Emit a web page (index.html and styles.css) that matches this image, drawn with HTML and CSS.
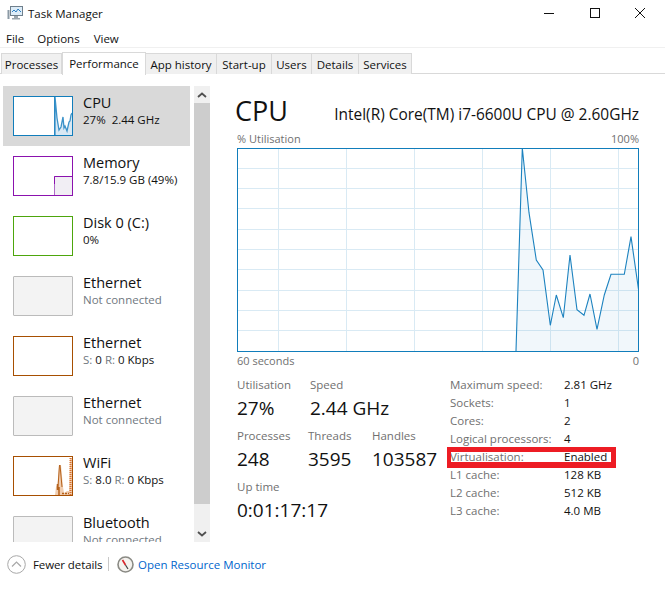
FILE: index.html
```html
<!DOCTYPE html>
<html lang="en">
<head>
<meta charset="utf-8">
<title>Task Manager</title>
<link rel="stylesheet" href="styles.css">
</head>
<body>
<div class="window">
  <header class="titlebar">
    <svg class="app-icon" width="16" height="16" viewBox="0 0 16 16"><rect x="3.500" y="1.500" width="12" height="9" fill="#dcecf8" stroke="#6f7f8c"/><path d="M5 7l2-2 2 2 2-3 3 3" fill="none" stroke="#2f7fc1"/><rect x="0.500" y="5" width="2" height="9" fill="#8c9aa5"/><path d="M7 11h4v2H7zM5 13h8v1.500H5z" fill="#9aa5ad"/></svg>
    <span class="title">Task Manager</span>
    <div class="controls">
      <svg width="10" height="10" viewBox="0 0 10 10"><path d="M0 5.500h10" stroke="#111"/></svg>
      <svg width="10" height="10" viewBox="0 0 10 10"><rect x=".5" y=".5" width="9" height="9" fill="none" stroke="#111"/></svg>
      <svg width="10" height="10" viewBox="0 0 10 10"><path d="M0 0l10 10M10 0L0 10" stroke="#111"/></svg>
    </div>
  </header>
  <nav class="menubar"><span>File</span><span>Options</span><span>View</span></nav>
  <div class="tabs">
    <div class="tab">Processes</div>
    <div class="tab active">Performance</div>
    <div class="tab">App history</div>
    <div class="tab">Start-up</div>
    <div class="tab">Users</div>
    <div class="tab">Details</div>
    <div class="tab">Services</div>
  </div>
  <main class="main">
    <aside class="sidebar">
      <div class="list">
        <div class="item selected">
          <div class="thumb cpu"><svg width="58" height="38" viewBox="0 0 58 38"><path d="M40.500 0V38" stroke="#117dbb"/><polygon points="41,38 41,0 43,21 45,33 47,30 49,20 50,31 51,29 53,34 55,25 56,24 57,18 58,16 58,38" fill="#d9e8f3"/><polyline points="41,38 41,0 43,21 45,33 47,30 49,20 50,31 51,29 53,34 55,25 56,24 57,18 58,16" fill="none" stroke="#3b92c9" stroke-width="1.300"/></svg></div>
          <div class="meta"><div class="name">CPU</div><div class="sub">27%&nbsp; 2.44 GHz</div></div>
        </div>
        <div class="item">
          <div class="thumb mem"><svg width="58" height="38" viewBox="0 0 58 38"><rect x="41" y="19" width="17" height="19" fill="#f1eef4"/><path d="M40.500 38V19.500H58" fill="none" stroke="#b06cc8"/><path d="M40.500 27V19.500H58" fill="none" stroke="#8b12ae"/></svg></div>
          <div class="meta"><div class="name">Memory</div><div class="sub">7.8/15.9 GB (49%)</div></div>
        </div>
        <div class="item">
          <div class="thumb disk"></div>
          <div class="meta"><div class="name">Disk 0 (C:)</div><div class="sub">0%</div></div>
        </div>
        <div class="item">
          <div class="thumb off"></div>
          <div class="meta"><div class="name">Ethernet</div><div class="sub muted">Not connected</div></div>
        </div>
        <div class="item">
          <div class="thumb net"></div>
          <div class="meta"><div class="name">Ethernet</div><div class="sub"><span class="muted">S:</span> 0 <span class="muted">R:</span> 0 Kbps</div></div>
        </div>
        <div class="item">
          <div class="thumb off"></div>
          <div class="meta"><div class="name">Ethernet</div><div class="sub muted">Not connected</div></div>
        </div>
        <div class="item">
          <div class="thumb net"><svg width="58" height="38" viewBox="0 0 58 38"><polygon points="41,38 42,30 43.500,27 45,8 47,8 49,30 50,36 53,34 55,34 56,1 58,1 58,38" fill="#f0cdb0"/><path d="M45.500 8 L44 30M46 8 L48 30" stroke="#b5621c" stroke-width="1"/><path d="M43.500 27v6M45 30v8" stroke="#b5621c" stroke-width="1.500"/><path d="M56.500 1V38" stroke="#d9702a" stroke-width="2" stroke-dasharray="1 1"/><path d="M48 36.500h7" stroke="#b5621c" stroke-width="1.500" stroke-dasharray="2 1"/></svg></div>
          <div class="meta"><div class="name">WiFi</div><div class="sub"><span class="muted">S:</span> 8.0 <span class="muted">R:</span> 0 Kbps</div></div>
        </div>
        <div class="item">
          <div class="thumb off"></div>
          <div class="meta"><div class="name">Bluetooth</div><div class="sub muted">Not connected</div></div>
        </div>
      </div>
      <div class="scrollbar">
        <div class="arrow"><svg width="10" height="6" viewBox="0 0 10 6"><path d="M1 5l4-3.500L9 5" fill="none" stroke="#505050" stroke-width="1.800"/></svg></div>
        <div class="scroll-thumb"></div>
        <div class="arrow down"><svg width="10" height="6" viewBox="0 0 10 6"><path d="M1 1l4 3.500L9 1" fill="none" stroke="#505050" stroke-width="1.800"/></svg></div>
      </div>
    </aside>
    <section class="detail">
      <div class="head"><h1>CPU</h1><div class="model">Intel(R) Core(TM) i7-6600U CPU @ 2.60GHz</div></div>
      <div class="axis top"><span>% Utilisation</span><span>100%</span></div>
      <div class="chart">
        <svg width="400" height="202" viewBox="1 1 400 202">
          <path d="M0 20.500H402M0 40.500H402M0 60.500H402M0 81.500H402M0 101.500H402M0 121.500H402M0 142.500H402M0 162.500H402M0 182.500H402M41.500 0V203M109.500 0V203M177.500 0V203M245.500 0V203M313.500 0V203M381.500 0V203" stroke="#d9eaf4" stroke-width="1"/>
          <polygon points="279,203 285.300,0 292,64.700 299.300,112 306,122 313.300,177.300 319.300,147 326.300,169.700 333,107 340,161.700 347,167.300 353,146 360,181.300 367.300,147 374,126.300 387.300,126.300 394,88.700 402,145 402,203" fill="#117dbb" fill-opacity="0.06"/>
          <polyline points="279,203 285.300,0 292,64.700 299.300,112 306,122 313.300,177.300 319.300,147 326.300,169.700 333,107 340,161.700 347,167.300 353,146 360,181.300 367.300,147 374,126.300 387.300,126.300 394,88.700 402,145" fill="none" stroke="#1c82bf" stroke-width="1.100"/>
        </svg>
      </div>
      <div class="axis bottom"><span>60 seconds</span><span>0</span></div>
      <div class="stats">
        <div class="live">
          <div class="stat-row">
            <div class="stat w-util"><div class="label">Utilisation</div><div class="value">27%</div></div>
            <div class="stat"><div class="label">Speed</div><div class="value">2.44 GHz</div></div>
          </div>
          <div class="stat-row">
            <div class="stat w-proc"><div class="label">Processes</div><div class="value">248</div></div>
            <div class="stat w-thr"><div class="label">Threads</div><div class="value">3595</div></div>
            <div class="stat"><div class="label">Handles</div><div class="value">103587</div></div>
          </div>
          <div class="stat-row">
            <div class="stat"><div class="label">Up time</div><div class="value">0:01:17:17</div></div>
          </div>
        </div>
        <dl class="specs">
          <div class="spec"><dt>Maximum speed:</dt><dd>2.81 GHz</dd></div>
          <div class="spec"><dt>Sockets:</dt><dd>1</dd></div>
          <div class="spec"><dt>Cores:</dt><dd>2</dd></div>
          <div class="spec"><dt>Logical processors:</dt><dd>4</dd></div>
          <div class="spec marked"><dt>Virtualisation:</dt><dd>Enabled</dd><span class="redbox"></span></div>
          <div class="spec"><dt>L1 cache:</dt><dd>128 KB</dd></div>
          <div class="spec"><dt>L2 cache:</dt><dd>512 KB</dd></div>
          <div class="spec"><dt>L3 cache:</dt><dd>4.0 MB</dd></div>
        </dl>
      </div>
    </section>
  </main>
  <footer class="footer">
    <svg class="fewer-icon" width="19" height="19" viewBox="0 0 19 19"><circle cx="9.500" cy="9.500" r="8.800" fill="#fff" stroke="#a8a8a8"/><path d="M5 11.500l4.500-4.500 4.500 4.500" fill="none" stroke="#a8a8a8" stroke-width="1.200"/></svg>
    <span class="fewer">Fewer details</span>
    <span class="sep"></span>
    <svg class="mon-icon" width="17" height="17" viewBox="0 0 17 17"><circle cx="8.500" cy="8.500" r="7.500" fill="#f4f2ee" stroke="#8a8a84" stroke-width="1.600"/><path d="M5.500 4l3 5" stroke="#d8232a" stroke-width="1.600"/><path d="M8.500 9l2.500 4" stroke="#444" stroke-width="1.200"/></svg>
    <a class="link">Open Resource Monitor</a>
  </footer>
</div>
</body>
</html>
```
FILE: styles.css
```css
* { box-sizing: border-box; }
html, body { margin: 0; padding: 0; background: #fff; }
body {
  font-family: "Open Sans", "Noto Sans", "Liberation Sans", sans-serif;
  font-size: 11.5px;
  color: #111;
  overflow: hidden;
}
.window { width: 665px; height: 591px; display: flex; flex-direction: column; }

.titlebar { height: 26px; margin-bottom: 4px; display: flex; align-items: center; padding-left: 7px; flex: none; }
.app-icon { flex: none; }
.title { margin-left: 5px; font-size: 11.5px; }
.controls { margin-left: auto; margin-right: 20px; display: flex; gap: 35.5px; align-items: center; }

.menubar { height: 17px; display: flex; align-items: center; padding-left: 6px; gap: 13px; flex: none; }
.menubar span:last-child { margin-left: 1px; }
.tabs {
  flex: none;
  height: 27px;
  border-top: 1px solid #f0f0f0;
  border-bottom: 1px solid #d9d9d9;
  padding: 4px 0 0 1px;
  display: grid;
  grid-template-columns: 61px 84px 71px 55px 40px 47px 53px;
  width: 665px;
  align-items: end;
}
.tab {
  height: 21px;
  border: 1px solid #d9d9d9;
  border-bottom: 0;
  border-left-width: 0;
  background: #f0f0f0;
  display: flex;
  align-items: center;
  justify-content: center;
  padding-top: 1px;
}
.tab:first-child { border-left-width: 1px; }
.tab.active {
  height: 23px;
  margin-bottom: -1px;
  background: #fff;
  border-left-width: 1px;
  padding-bottom: 3px;
  position: relative;
}

.main { flex: none; height: 456px; margin-top: 12px; display: flex; }

.sidebar { flex: none; width: 229px; height: 456px; padding-left: 3px; display: flex; }
.list { width: 187px; height: 456px; overflow: hidden; flex: none; }
.item { height: 60px; padding: 10px; display: flex; }
.item.selected { background: #d9d9d9; }
.thumb { flex: none; width: 60px; height: 40px; border: 1px solid #bbb; background: #fff; }
.thumb svg { display: block; }
.thumb.cpu { border-color: #117dbb; }
.thumb.mem { border-color: #8b12ae; }
.thumb.disk { border-color: #4da60c; }
.thumb.net { border-color: #a74f01; }
.thumb.off { background: #f3f3f3; border-radius: 1px; }
.meta { margin-left: 10px; white-space: nowrap; }
.name { font-size: 14.5px; line-height: 19px; margin-top: -3px; }
.sub { font-size: 11.5px; line-height: 16px; }
.muted { color: #707880; }

.scrollbar { flex: none; width: 16px; height: 456px; margin-left: 4px; background: #f0f0f0; display: flex; flex-direction: column; }
.arrow { height: 17px; flex: none; display: flex; align-items: center; justify-content: center; }
.scroll-thumb { flex: 1 1 auto; background: #cdcdcd; margin-bottom: 21px; }

.detail { flex: none; width: 402px; margin-left: 8px; height: 456px; }
.head { height: 46px; display: flex; justify-content: space-between; align-items: flex-start; }
h1 { margin: 7px 0 0 -2px; font-size: 27px; font-weight: 400; line-height: 36px; }
.model { font-size: 15.45px; line-height: 20px; margin-top: 18px; white-space: nowrap; }
.axis { display: flex; justify-content: space-between; color: #707070; font-size: 11px; line-height: 14px; }
.axis.top { height: 16px; }
.axis.bottom { height: 19px; padding-top: 2px; }
.chart { width: 402px; height: 204px; border: 1px solid #117dbb; background: #fff; }
.chart svg { display: block; }

.stats { display: flex; padding-top: 6px; }
.live { width: 213px; flex: none; }
.stat-row { display: flex; height: 51px; }
.stat { white-space: nowrap; }
.w-util { width: 73px; }
.w-proc { width: 71px; }
.w-thr { width: 64px; }
.label { color: #707070; font-size: 11.5px; line-height: 16px; }
.value { font-size: 19px; line-height: 26px; margin-top: 2px; }

.specs { margin: -1px 0 0; flex: none; }
.spec { display: flex; height: 18px; line-height: 18px; position: relative; font-size: 11.5px; }
.spec dt { width: 114px; color: #707070; white-space: nowrap; }
.spec dd { margin: 0; white-space: nowrap; }
.redbox {
  position: absolute;
  left: -3px;
  top: -1px;
  width: 169px;
  height: 21px;
  border-style: solid;
  border-color: #ed1c24;
  border-width: 5px 5px 6px 4px;
}

.footer { flex: 1; display: flex; align-items: center; padding-left: 7px; padding-bottom: 5px; }
.fewer-icon { flex: none; }
.fewer { margin-left: 7px; width: 69px; white-space: nowrap; letter-spacing: -0.1px; }
.sep { width: 1px; height: 14px; background: #c8c8c8; margin-left: 6px; }
.mon-icon { margin-left: 8px; flex: none; }
.link { margin-left: 4px; color: #0066cc; }
```
